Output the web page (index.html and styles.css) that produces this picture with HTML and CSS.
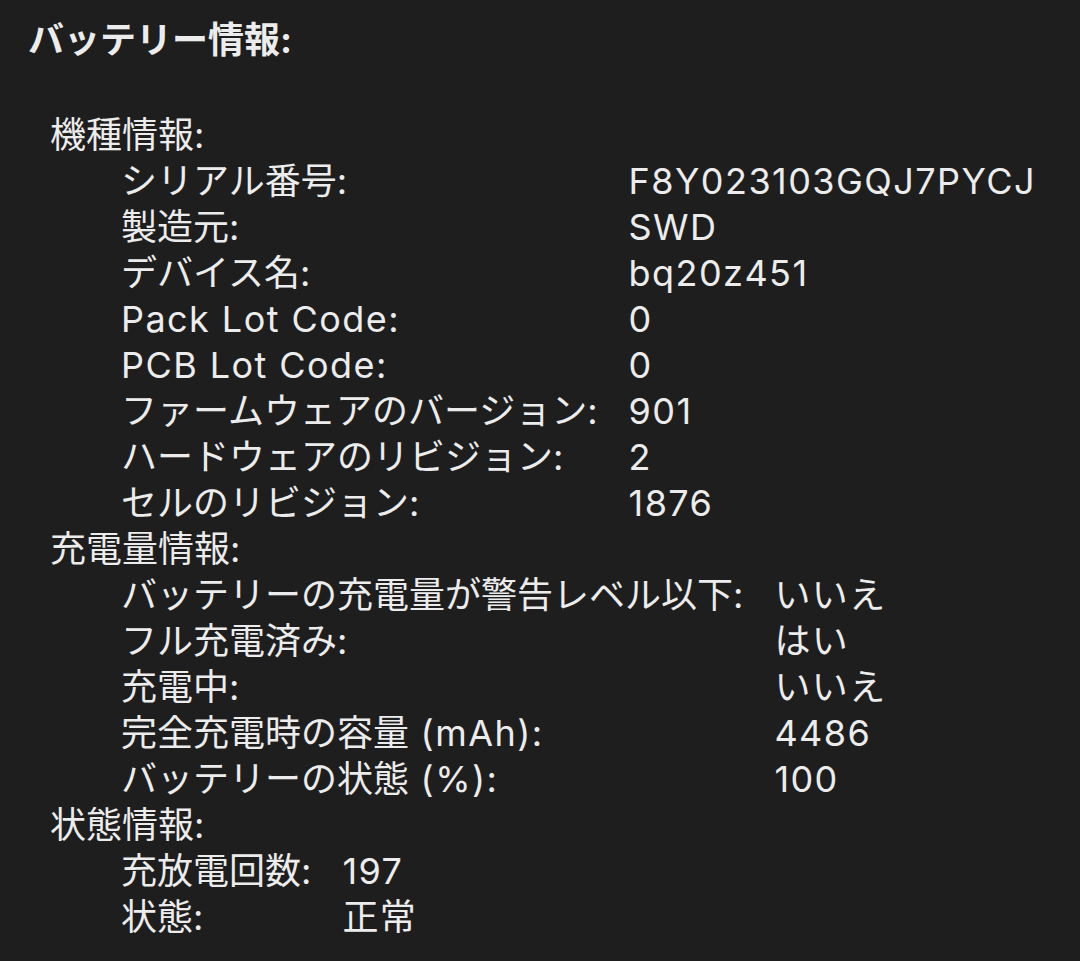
FILE: index.html
```html
<!DOCTYPE html>
<html lang="ja">
<head>
    <meta charset="UTF-8">
    <meta name="viewport" content="width=device-width, initial-scale=1.0">
    <title>バッテリー情報</title>
    <link rel="stylesheet" href="styles.css">
</head>
<body>
    <div class="report">
        <h1 class="report-title">バッテリー情報:</h1>

        <div class="section">
            <h2 class="section-title">機種情報:</h2>
            <dl class="props">
                <dt>シリアル番号:</dt><dd>F8Y023103GQJ7PYCJ</dd>
                <dt>製造元:</dt><dd>SWD</dd>
                <dt>デバイス名:</dt><dd>bq20z451</dd>
                <dt class="latin">Pack Lot Code:</dt><dd>0</dd>
                <dt class="latin">PCB Lot Code:</dt><dd>0</dd>
                <dt>ファームウェアのバージョン:</dt><dd>901</dd>
                <dt>ハードウェアのリビジョン:</dt><dd>2</dd>
                <dt>セルのリビジョン:</dt><dd>1876</dd>
            </dl>
        </div>

        <div class="section">
            <h2 class="section-title">充電量情報:</h2>
            <dl class="props">
                <dt>バッテリーの充電量が警告レベル以下:</dt><dd>いいえ</dd>
                <dt>フル充電済み:</dt><dd>はい</dd>
                <dt>充電中:</dt><dd>いいえ</dd>
                <dt>完全充電時の容量<span class="latin"> (mAh):</span></dt><dd>4486</dd>
                <dt>バッテリーの状態<span class="latin"> (%):</span></dt><dd>100</dd>
            </dl>
        </div>

        <div class="section">
            <h2 class="section-title">状態情報:</h2>
            <dl class="props">
                <dt>充放電回数:</dt><dd>197</dd>
                <dt>状態:</dt><dd>正常</dd>
            </dl>
        </div>
    </div>
</body>
</html>
```

FILE: styles.css
```css
body {
    margin: 0;
    padding: 17px 0 0 28px;
    background-color: #1e1e1e;
    color: #ececec;
    font-family: Inter, "Noto Sans CJK JP", sans-serif;
    font-size: 36px;
    line-height: 46px;
}

.report-title {
    margin: 0 0 49px 0;
    font-size: 36px;
    font-weight: bold;
    line-height: 46px;
}

.section-title {
    margin: 0 0 0 22px;
    font-size: 36px;
    font-weight: normal;
    line-height: 46px;
}

.props {
    display: grid;
    grid-template-columns: max-content max-content;
    column-gap: 31px;
    margin: 0 0 0 93px;
}

.props dt,
.props dd {
    margin: 0;
}

.props dd,
.latin {
    letter-spacing: 0.04em;
}
```
